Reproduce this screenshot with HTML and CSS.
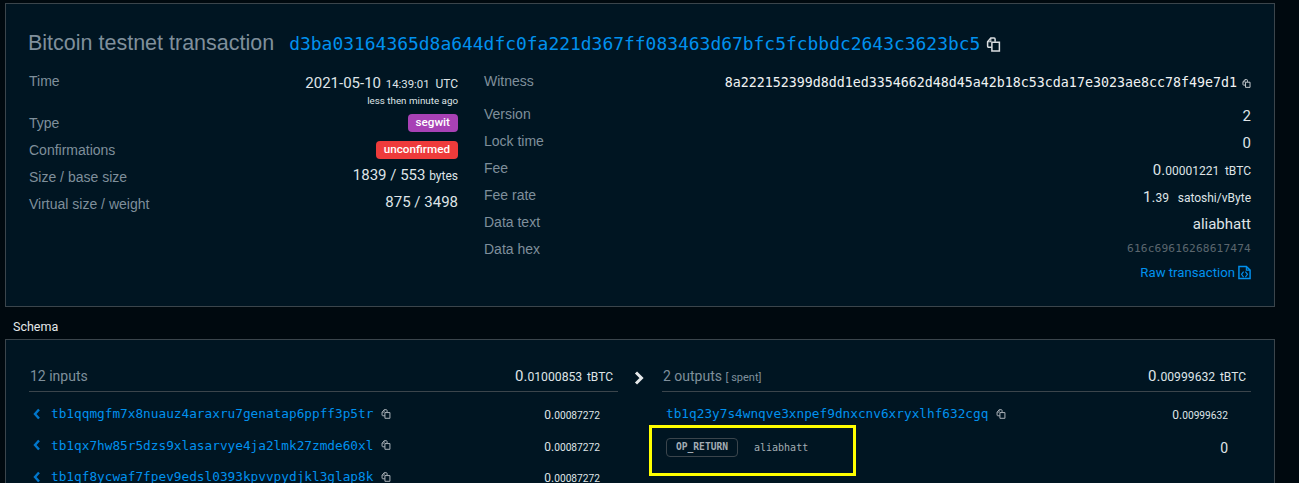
FILE: index.html
```html
<!DOCTYPE html>
<html lang="en">
<head>
<meta charset="UTF-8">
<meta name="viewport" content="width=device-width, initial-scale=1.0">
<title>Bitcoin testnet transaction</title>
<link rel="stylesheet" href="styles.css">
</head>
<body>

<svg class="defs" width="0" height="0" aria-hidden="true">
  <symbol id="copyIcon" viewBox="0 0 14 14">
    <path d="M5.5 9.5H2.5C1.9 9.5 1.5 9.1 1.5 8.5V4.5L4.5 1H7.5C8.1 1 8.5 1.4 8.5 2V4.5" fill="none" stroke="currentColor" stroke-width="1.4"/>
    <path d="M5.5 5H12.5V13H5.5Z" fill="none" stroke="currentColor" stroke-width="1.4"/>
    <path d="M4.5 1V4.5H1.5" fill="none" stroke="currentColor" stroke-width="1"/>
  </symbol>
</svg>

<section class="card txCard">
  <h1 class="txTitle">
    <span>Bitcoin testnet transaction</span>
    <a class="txHash">d3ba03164365d8a644dfc0fa221d367ff083463d67bfc5fcbbdc2643c3623bc5</a>
    <svg class="copy copyLarge"><use href="#copyIcon"/></svg>
  </h1>
  <div class="txColumns">
    <div class="txCol txColLeft">
      <div class="row rowTime">
        <div class="label">Time</div>
        <div class="value">
          <div>2021-05-10 <small class="time clock">14:39:01</small> <small class="unit unitGap">UTC</small></div>
          <div class="ago">less then minute ago</div>
        </div>
      </div>
      <div class="row">
        <div class="label">Type</div>
        <div class="value"><span class="badge badgePurple">segwit</span></div>
      </div>
      <div class="row">
        <div class="label">Confirmations</div>
        <div class="value"><span class="badge badgeRed">unconfirmed</span></div>
      </div>
      <div class="row">
        <div class="label">Size / base size</div>
        <div class="value">1839 / 553 <small class="unit">bytes</small></div>
      </div>
      <div class="row">
        <div class="label">Virtual size / weight</div>
        <div class="value">875 / 3498</div>
      </div>
    </div>
    <div class="txCol txColRight">
      <div class="row rowWitness">
        <div class="label">Witness</div>
        <div class="value witness">8a222152399d8dd1ed3354662d48d45a42b18c53cda17e3023ae8cc78f49e7d1<svg class="copy"><use href="#copyIcon"/></svg></div>
      </div>
      <div class="row">
        <div class="label">Version</div>
        <div class="value">2</div>
      </div>
      <div class="row">
        <div class="label">Lock time</div>
        <div class="value">0</div>
      </div>
      <div class="row">
        <div class="label">Fee</div>
        <div class="value">0.<small class="time">00001221</small> <small class="unit unitGap">tBTC</small></div>
      </div>
      <div class="row">
        <div class="label">Fee rate</div>
        <div class="value">1.<small class="time">39</small> <small class="unit unitGapWide">satoshi/vByte</small></div>
      </div>
      <div class="row">
        <div class="label">Data text</div>
        <div class="value">aliabhatt</div>
      </div>
      <div class="row">
        <div class="label">Data hex</div>
        <div class="value dataHex">616c69616268617474</div>
      </div>
      <div class="rawLink">
        <a>Raw transaction</a>
        <svg class="rawIcon" viewBox="0 0 14 15">
          <path d="M1 1H9L13 5V14H1Z" fill="none" stroke="currentColor" stroke-width="1.6"/>
          <path d="M9 1V5H13M6 6.5L3.8 9.5L6 12.5M8 6.5L10.2 9.5L8 12.5" fill="none" stroke="currentColor" stroke-width="1.2"/>
        </svg>
      </div>
    </div>
  </div>
</section>

<h2 class="sectionTitle">Schema</h2>

<section class="card schemaCard">
  <div class="schema">
    <div class="schemaCol schemaInputs">
      <div class="schemaHead">
        <span class="schemaCount">12 inputs</span>
        <span class="schemaTotal">0.<small>01000853</small> <small class="totalUnit">tBTC</small></span>
      </div>
      <div class="addrRow">
        <svg class="chevron" viewBox="0 0 8 12"><path d="M6 1.5L2 6L6 10.5" fill="none" stroke="currentColor" stroke-width="2.4"/></svg>
        <a class="addr">tb1qqmgfm7x8nuauz4araxru7genatap6ppff3p5tr</a>
        <svg class="copy"><use href="#copyIcon"/></svg>
        <span class="amount">0.<small>00087272</small></span>
      </div>
      <div class="addrRow">
        <svg class="chevron" viewBox="0 0 8 12"><path d="M6 1.5L2 6L6 10.5" fill="none" stroke="currentColor" stroke-width="2.4"/></svg>
        <a class="addr">tb1qx7hw85r5dzs9xlasarvye4ja2lmk27zmde60xl</a>
        <svg class="copy"><use href="#copyIcon"/></svg>
        <span class="amount">0.<small>00087272</small></span>
      </div>
      <div class="addrRow">
        <svg class="chevron" viewBox="0 0 8 12"><path d="M6 1.5L2 6L6 10.5" fill="none" stroke="currentColor" stroke-width="2.4"/></svg>
        <a class="addr">tb1qf8ycwaf7fpev9edsl0393kpvvpydjkl3glap8k</a>
        <svg class="copy"><use href="#copyIcon"/></svg>
        <span class="amount">0.<small>00087272</small></span>
      </div>
    </div>
    <div class="schemaArrow">
      <svg viewBox="0 0 12 14"><path d="M3 1.5L8.5 7L3 12.5" fill="none" stroke="currentColor" stroke-width="3"/></svg>
    </div>
    <div class="schemaCol schemaOutputs">
      <div class="schemaHead">
        <span class="schemaCount">2 outputs <small>[ spent]</small></span>
        <span class="schemaTotal">0.<small>00999632</small> <small class="totalUnit">tBTC</small></span>
      </div>
      <div class="addrRow">
        <a class="addr">tb1q23y7s4wnqve3xnpef9dnxcnv6xryxlhf632cgq</a>
        <svg class="copy"><use href="#copyIcon"/></svg>
        <span class="amount">0.<small>00999632</small></span>
      </div>
      <div class="addrRow opRow">
        <span class="opTag">OP_RETURN</span>
        <span class="opText">aliabhatt</span>
        <span class="amount amountZero">0</span>
        <div class="highlight"></div>
      </div>
    </div>
  </div>
</section>

</body>
</html>
```

FILE: styles.css
```css
html,
body {
  height: 483px;
  overflow: hidden;
}

body {
  margin: 0;
  padding: 3px 24px 0 5px;
  box-sizing: border-box;
  background-color: #00090f;
  font-family: Roboto, "Liberation Sans", sans-serif;
  font-size: 15px;
  color: #e4e8ea;
}

.defs {
  position: absolute;
}

.card {
  background-color: #001522;
  border: 1px solid #3b454c;
}

.txCard {
  height: 304px;
  box-sizing: border-box;
  padding: 24px 23px 0;
}

.txTitle {
  display: flex;
  align-items: center;
  margin: 0 0 0 -1px;
  height: 30px;
  font-size: 21.5px;
  font-weight: 400;
  font-family: "Liberation Sans", sans-serif;
  color: #7f8f9b;
}

.txHash {
  margin-left: 15px;
  font-family: "DejaVu Sans Mono", monospace;
  font-size: 17.95px;
  color: #0091ee;
}

.copy {
  width: 10px;
  height: 10px;
  margin-left: 5px;
  color: #aab2b8;
  flex: none;
}

.copyLarge {
  width: 15px;
  height: 15px;
  margin-left: 6px;
  margin-top: 2px;
  color: #d8dcdf;
}

.txColumns {
  display: flex;
  margin-top: 12px;
  gap: 26px;
}

.txCol {
  flex: none;
}

.txColLeft {
  width: 429px;
}

.txColRight {
  width: 767px;
}

.row {
  display: flex;
  justify-content: space-between;
  height: 27px;
  line-height: 22px;
}

.rowTime {
  height: 42px;
}

.rowWitness {
  height: 33px;
}

.label {
  font-family: "Liberation Sans", sans-serif;
  font-size: 14px;
  color: #7f8f9b;
}

.value {
  text-align: right;
  color: #dfe4e7;
}

.txColLeft .value {
  margin-top: -2px;
}

.txColLeft .rowTime .value {
  margin-top: 2px;
}

.txColRight .value {
  margin-top: 2px;
}

.txColRight .dataHex {
  margin-top: 0;
}

.unit {
  font-size: 12px;
}

.time {
  font-size: 12px;
}

.clock {
  font-size: 11.4px;
  margin-left: 1px;
}

.unitGap {
  margin-left: 2px;
}

.unitGapWide {
  margin-left: 5px;
}

.ago {
  font-size: 9.8px;
  line-height: 12px;
}

.badge {
  display: inline-block;
  border-radius: 4px;
  padding: 0 8px;
  height: 18px;
  line-height: 17px;
  font-size: 11.7px;
  font-weight: 500;
  color: #fff;
}

.badgePurple {
  background-color: #a841b5;
}

.badgeRed {
  background-color: #ee3b3b;
}

.witness {
  display: flex;
  align-items: center;
  height: 22px;
  font-family: "DejaVu Sans Mono", monospace;
  font-size: 13.3px;
  color: #f0f2f3;
}

.witness .copy {
  width: 9px;
  height: 9px;
  margin-left: 5px;
  color: #d8dcdf;
}

.dataHex {
  font-family: "DejaVu Sans Mono", monospace;
  font-size: 11.2px;
  letter-spacing: 0.15px;
  color: #5b666e;
}

.rawLink {
  display: flex;
  justify-content: flex-end;
  align-items: center;
  gap: 3px;
  margin-top: -4px;
  height: 22px;
  font-size: 13.2px;
  color: #0091ee;
}

.rawIcon {
  width: 13px;
  height: 15px;
}

.sectionTitle {
  margin: 0;
  height: 32px;
  padding: 12px 0 0 8px;
  box-sizing: border-box;
  line-height: 16px;
  font-size: 12.5px;
  font-weight: 400;
  color: #e4e8ea;
}

.schemaCard {
  height: 200px;
  box-sizing: border-box;
  padding: 23px 23px 0;
}

.schema {
  display: flex;
}

.schemaCol {
  width: 589px;
  flex: none;
}

.schemaArrow {
  width: 44px;
  flex: none;
  display: flex;
  justify-content: center;
  color: #e4e8ea;
}

.schemaArrow svg {
  width: 12px;
  height: 14px;
  margin: 8px 3px 0 0;
}

.schemaHead {
  display: flex;
  justify-content: space-between;
  align-items: center;
  height: 26px;
  margin-bottom: 6px;
  padding: 0 5px 2px 1px;
  border-bottom: 1px solid #3b454c;
}

.schemaCount {
  font-size: 14px;
  color: #7f8f9b;
}

.schemaCount small {
  font-size: 11px;
}

.schemaTotal {
  font-size: 15px;
  color: #dfe4e7;
}

.schemaTotal small {
  font-size: 12.2px;
}

.schemaTotal .totalUnit {
  font-size: 12px;
  margin-left: 1px;
}

.addrRow {
  display: flex;
  align-items: center;
  height: 31.5px;
  padding-left: 4px;
}

.chevron {
  width: 8px;
  height: 12px;
  flex: none;
  margin-right: 10px;
  color: #0077cc;
}

.addr {
  font-family: "DejaVu Sans Mono", monospace;
  font-size: 12.75px;
  color: #0091ee;
}

.addr + .copy {
  margin-left: 8px;
}

.amount {
  margin-left: auto;
  margin-top: 3px;
  margin-right: 18px;
  font-size: 12px;
  color: #dfe4e7;
}

.amount small {
  font-size: 10.2px;
}

.schemaOutputs .amount {
  margin-right: 23px;
}

.opRow {
  position: relative;
  margin-top: 2px;
}

.opTag {
  border: 1px solid #3b454c;
  border-radius: 4px;
  padding: 0 9px;
  height: 17px;
  line-height: 16px;
  font-family: "DejaVu Sans Mono", monospace;
  font-size: 9.6px;
  font-weight: 700;
  color: #a3adb4;
}

.opText {
  margin-left: 16px;
  font-family: "DejaVu Sans Mono", monospace;
  font-size: 10px;
  color: #a3adb4;
}

.schemaOutputs .amountZero {
  margin-top: 1px;
  font-size: 14px;
}

.highlight {
  position: absolute;
  left: -13px;
  top: -7px;
  width: 201px;
  height: 45px;
  border: 3px solid #ffff00;
}
```
